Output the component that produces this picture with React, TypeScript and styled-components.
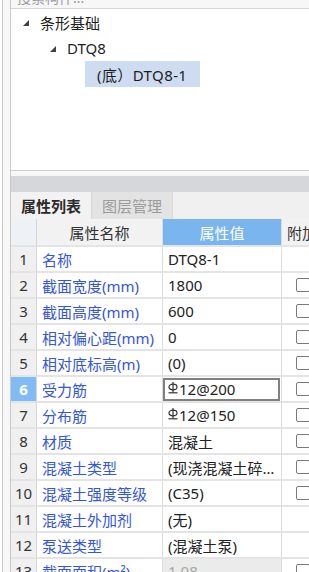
import React from "react";
import styled, { createGlobalStyle } from "styled-components";

const Global = createGlobalStyle`
  html, body { margin: 0; padding: 0; background: #ffffff; }
  body {
    width: 309px; height: 572px; overflow: hidden;
    font-family: "Noto Sans", "Noto Sans CJK SC", sans-serif;
    -webkit-font-smoothing: antialiased;
  }
`;

const Page = styled.div`
  width: 307px;
  height: 572px;
  margin-left: 2px;
  border-left: 1px solid #c9c9c9;
  padding-left: 7px;
  box-sizing: border-box;
  background: #f7f7f7;
  overflow: hidden;
`;

const Panel = styled.div`
  width: 320px;
  height: 100%;
  border-left: 1px solid #c9c9c9;
  display: flex;
  flex-direction: column;
  background: #ffffff;
  & > * { flex-shrink: 0; }
`;

const TopLabel = styled.div`
  height: 8px;
  overflow: hidden;
  background: #f7f7f7;
  color: #9a9a9a;
  font-size: 14px;
  line-height: 8px;
  padding-left: 6px;
  & > span { display: block; margin-top: -9px; line-height: 14px; }
`;

const TreeBox = styled.div`
  height: 163px;
  border-top: 1px solid #d6d6d6;
  border-bottom: 1px solid #cfcfcf;
  background: #ffffff;
  padding-top: 0;
  box-sizing: border-box;
  display: flex;
  flex-direction: column;
`;

const TreeRow = styled.div<{ $level: number }>`
  height: 26px;
  display: flex;
  align-items: center;
  padding-left: ${(p) => 12 + p.$level * 27}px;
  font-size: 15px;
  color: #1e1e1e;
`;

const Caret = styled.span`
  width: 0; height: 0;
  border-style: solid;
  border-width: 0 0 6px 6px;
  border-color: transparent transparent #404040 transparent;
  margin-right: 11px;
  margin-top: 1px;
`;

const Selected = styled.span`
  background: #cddcf0;
  height: 26px;
  display: flex;
  align-items: center;
  padding: 0 13px 0 12px;
  margin-left: 8px;
  letter-spacing: 0.4px;
`;

const Gap = styled.div`
  height: 5px;
  background: #f7f7f7;
`;

const GreyBar = styled.div`
  height: 16px;
  background: #d5d7da;
`;

const TabStrip = styled.div`
  height: 27px;
  background: #f0f0f0;
  display: flex;
`;

const Tab = styled.div<{ $active?: boolean }>`
  width: 80px;
  display: flex;
  align-items: center;
  justify-content: center;
  font-size: 15px;
  font-weight: ${(p) => (p.$active ? 700 : 400)};
  color: ${(p) => (p.$active ? "#2a2a2a" : "#9b9b9b")};
  background: ${(p) => (p.$active ? "#f2f2f2" : "#e3e3e3")};
  border-right: 1px solid #d8d8d8;
`;

const Grid = styled.div`
  display: grid;
  grid-template-columns: 26px 126px 119px 40px;
  grid-template-rows: 28px;
  grid-auto-rows: 26px;
  background: #ffffff;
`;

const Cell = styled.div<{ $bg?: string; $color?: string; $center?: boolean }>`
  box-sizing: border-box;
  display: flex;
  align-items: center;
  justify-content: ${(p) => (p.$center ? "center" : "flex-start")};
  padding-left: ${(p) => (p.$center ? 0 : 5)}px;
  border-right: 1px solid #dcdcdc;
  border-bottom: 2px solid #e4e4e4;
  background: ${(p) => p.$bg || "#ffffff"};
  color: ${(p) => p.$color || "#222222"};
  font-size: 15px;
  white-space: nowrap;
  overflow: hidden;
  position: relative;
`;

const NumCell = styled(Cell)<{ $active?: boolean }>`
  justify-content: center;
  padding-left: 0;
  background: ${(p) => (p.$active ? "#80bbf5" : "#f0f0f0")};
  color: ${(p) => (p.$active ? "#ffffff" : "#333333")};
  font-weight: ${(p) => (p.$active ? 700 : 400)};
  border-right: 1px solid #d6d6d6;
`;

const HeadNum = styled(NumCell)`
  background: #eef1f5;
`;

const EditBox = styled.div`
  position: absolute;
  inset: 1px 1px 0 0;
  border: 2px solid #808080;
  box-sizing: border-box;
  pointer-events: none;
`;

const CheckBox = styled.span`
  width: 12px;
  height: 12px;
  border: 1px solid #7a7a7a;
  border-radius: 2px;
  background: #ffffff;
  margin-left: 9px;
`;

const Ellipsis = styled.span`
  overflow: hidden;
  text-overflow: ellipsis;
  max-width: 110px;
  display: block;
`;

const Rebar = () => (
  <svg width="10" height="14" viewBox="0 0 10 14" style={{ marginRight: 1, marginTop: -2 }}>
    <ellipse cx="5" cy="6" rx="4" ry="2.8" fill="none" stroke="#333" strokeWidth="1.2" />
    <line x1="5" y1="1" x2="5" y2="11.5" stroke="#333" strokeWidth="1.2" />
    <line x1="0.5" y1="11.8" x2="9.5" y2="11.8" stroke="#333" strokeWidth="1.2" />
  </svg>
);

type Row = { n: number; name: string; value: React.ReactNode; check: boolean; edit?: boolean; disabled?: boolean };

const rows: Row[] = [
  { n: 1, name: "名称", value: "DTQ8-1", check: false },
  { n: 2, name: "截面宽度(mm)", value: "1800", check: true },
  { n: 3, name: "截面高度(mm)", value: "600", check: true },
  { n: 4, name: "相对偏心距(mm)", value: "0", check: true },
  { n: 5, name: "相对底标高(m)", value: "(0)", check: true },
  { n: 6, name: "受力筋", value: <><Rebar />12@200</>, check: true, edit: true },
  { n: 7, name: "分布筋", value: <><Rebar />12@150</>, check: true },
  { n: 8, name: "材质", value: "混凝土", check: true },
  { n: 9, name: "混凝土类型", value: <Ellipsis>(现浇混凝土碎石...</Ellipsis>, check: true },
  { n: 10, name: "混凝土强度等级", value: "(C35)", check: true },
  { n: 11, name: "混凝土外加剂", value: "(无)", check: false },
  { n: 12, name: "泵送类型", value: "(混凝土泵)", check: false },
  { n: 13, name: "截面面积(m²)", value: "1.08", check: true, disabled: true },
];

export default function App() {
  return (
    <>
      <Global />
      <Page>
        <Panel>
          <TopLabel><span>搜索构件...</span></TopLabel>
          <TreeBox>
            <TreeRow $level={0}><Caret />条形基础</TreeRow>
            <TreeRow $level={1}><Caret />DTQ8</TreeRow>
            <TreeRow $level={2}><Selected>(底）DTQ8-1</Selected></TreeRow>
          </TreeBox>
          <Gap />
          <GreyBar />
          <TabStrip>
            <Tab $active>属性列表</Tab>
            <Tab>图层管理</Tab>
          </TabStrip>
          <Grid>
            <HeadNum />
            <Cell $center $bg="#f2f2f2" $color="#333333">属性名称</Cell>
            <Cell $center $bg="#7ab5ef" $color="#ffffff">属性值</Cell>
            <Cell $bg="#f2f2f2" $color="#333333">附加</Cell>
            {rows.map((r) => (
              <React.Fragment key={r.n}>
                <NumCell $active={r.edit}>{r.n}</NumCell>
                <Cell $color="#3456dc">{r.name}</Cell>
                <Cell $bg={r.disabled ? "#ebebeb" : undefined} $color={r.disabled ? "#a8a8a8" : undefined}>
                  {r.value}
                  {r.edit && <EditBox />}
                </Cell>
                <Cell>{r.check && <CheckBox />}</Cell>
              </React.Fragment>
            ))}
          </Grid>
        </Panel>
      </Page>
    </>
  );
}
